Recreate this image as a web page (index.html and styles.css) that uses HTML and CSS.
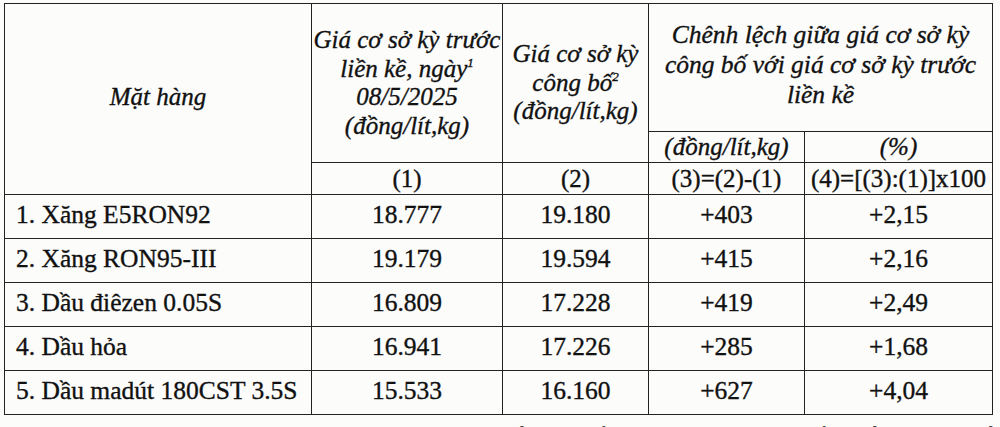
FILE: index.html
```html
<!DOCTYPE html>
<html lang="vi">
<head>
<meta charset="utf-8">
<link rel="stylesheet" href="styles.css">
</head>
<body>
<div class="page">
<table class="price">
  <colgroup>
    <col class="c0"><col class="c1"><col class="c2"><col class="c3"><col class="c4">
  </colgroup>
  <thead>
    <tr class="h1">
      <th rowspan="3" class="item-head">Mặt hàng</th>
      <th rowspan="2" class="hd">Giá cơ sở kỳ trước<br>liền kề, ngày<sup>1</sup><br>08/5/2025<br>(đồng/lít,kg)</th>
      <th rowspan="2" class="hd">Giá cơ sở kỳ<br>công bố<sup>2</sup><br>(đồng/lít,kg)</th>
      <th colspan="2" class="hd wide">Chênh lệch giữa giá cơ sở kỳ<br>công bố với giá cơ sở kỳ trước<br>liền kề</th>
    </tr>
    <tr class="h2">
      <th class="hd sub">(đồng/lít,kg)</th>
      <th class="hd sub">(%)</th>
    </tr>
    <tr class="h3">
      <th class="num-head">(1)</th>
      <th class="num-head">(2)</th>
      <th class="num-head">(3)=(2)-(1)</th>
      <th class="num-head">(4)=[(3):(1)]x100</th>
    </tr>
  </thead>
  <tbody>
    <tr><td class="name">1. Xăng E5RON92</td><td>18.777</td><td>19.180</td><td>+403</td><td>+2,15</td></tr>
    <tr><td class="name">2. Xăng RON95-III</td><td>19.179</td><td>19.594</td><td>+415</td><td>+2,16</td></tr>
    <tr><td class="name">3. Dầu điêzen 0.05S</td><td>16.809</td><td>17.228</td><td>+419</td><td>+2,49</td></tr>
    <tr><td class="name">4. Dầu hỏa</td><td>16.941</td><td>17.226</td><td>+285</td><td>+1,68</td></tr>
    <tr><td class="name">5. Dầu madút 180CST 3.5S</td><td>15.533</td><td>16.160</td><td>+627</td><td>+4,04</td></tr>
  </tbody>
</table>
<p class="after">Mức trích lập Quỹ Bình ổn giá đối với mặt hàng xăng dầu để áp dụng kể từ khi</p>
</div>
</body>
</html>
```

FILE: styles.css
```css
html, body {
  margin: 0;
  padding: 0;
  background: #fcfcfb;
}
.page {
  padding: 3px 0 0 4px;
  width: 996px;
  height: 427px;
  overflow: hidden;
  font-family: "Liberation Serif", "Times New Roman", serif;
  color: #111;
  -webkit-text-stroke: 0.35px #111;
}
.price {
  border-collapse: collapse;
  table-layout: fixed;
  width: 988px;
}
.c0 { width: 307px; }
.c1 { width: 191px; }
.c2 { width: 146px; }
.c3 { width: 156px; }
.c4 { width: 188px; }
.price th, .price td {
  border: 1.5px solid #222;
  padding: 0;
  text-align: center;
  vertical-align: middle;
  font-weight: normal;
}
.hd {
  font-style: italic;
  font-size: 25px;
  line-height: 28.5px;
}
.item-head {
  font-style: italic;
  font-size: 25px;
  padding-bottom: 4px !important;
}
.hd sup {
  font-size: 13px;
  vertical-align: 10px;
  line-height: 0;
}
.h1 { height: 128px; }
.h2 { height: 31px; }
.h3 { height: 32px; }
.wide { font-size: 25.5px; line-height: 30px; padding-bottom: 6px !important; }
.sub { line-height: 26px; }
.num-head {
  font-size: 25px;
  line-height: 28px;
}
.price tbody tr { height: 44px; }
.price td {
  font-size: 25.5px;
  line-height: 30px;
  padding-bottom: 3px;
}
.price td.name {
  text-align: left;
  padding-left: 11px;
}
.after {
  margin: 7px 0 0 262px;
  font-size: 25px;
  line-height: 30px;
  white-space: nowrap;
}
```
